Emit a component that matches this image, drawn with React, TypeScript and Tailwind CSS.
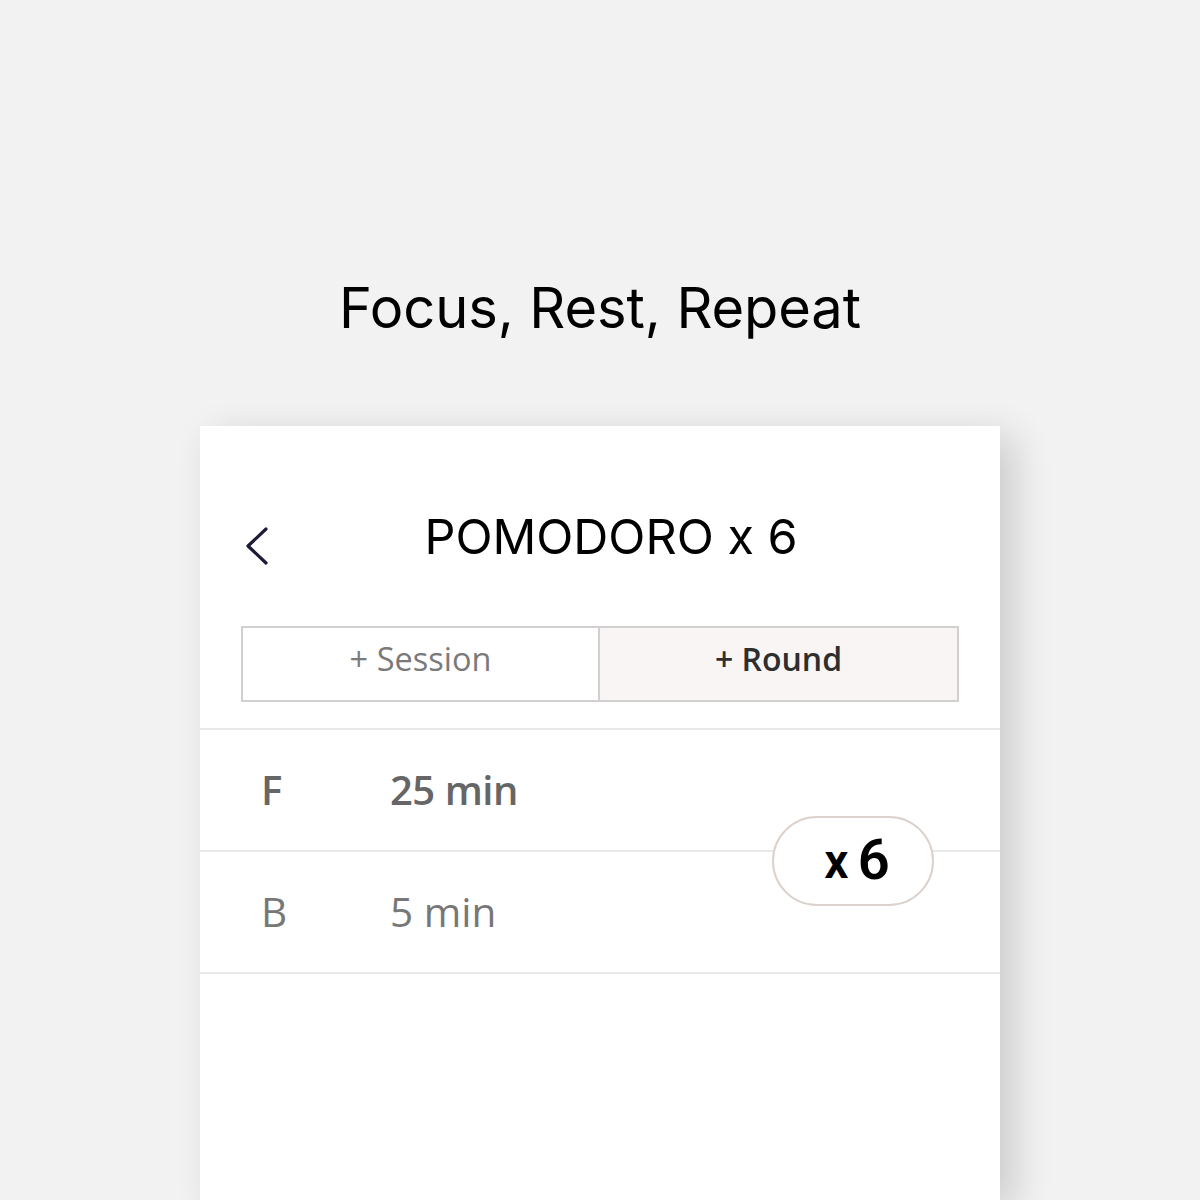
export default function App() {
  return (
    <div className="w-[1200px] h-[1200px] bg-[#f2f2f2] overflow-hidden flex flex-col items-center">
      <h1
        className="mt-[276px] h-[64px] text-[56px] leading-[64px] text-black tracking-[-0.1px]"
        style={{ fontFamily: 'Inter, "Liberation Sans", sans-serif' }}
      >
        Focus, Rest, Repeat
      </h1>
      <div className="mt-[86px] w-[800px] flex-1 bg-white shadow-[14px_10px_36px_rgba(0,0,0,0.16)] flex flex-col">
        <div className="relative h-[200px] flex items-start">
          <svg
            className="absolute left-[43px] top-[100px]"
            width="30"
            height="40"
            viewBox="0 0 30 40"
            fill="none"
          >
            <path d="M23 3 L5 20 L23 37" stroke="#1c1b38" strokeWidth="3.2" strokeLinecap="round" strokeLinejoin="round" />
          </svg>
          <div
            className="w-full pl-[22px] mt-[83px] text-center text-[48.5px] leading-[56px] text-black"
            style={{ fontFamily: 'Inter, "Liberation Sans", sans-serif' }}
          >
            POMODORO x 6
          </div>
        </div>
        <div
          className="mx-[41px] h-[76px] border-2 border-[#d0d0d0] grid grid-cols-[355px_1fr]"
          style={{ fontFamily: '"Open Sans", "Liberation Sans", sans-serif' }}
        >
          <div className="flex items-center justify-center text-[32.5px] text-[#7a7a7a] bg-white pb-[10px]">
            + Session
          </div>
          <div className="flex items-center justify-center text-[32px] font-semibold text-[#2e2e2e] bg-[#f8f5f4] border-l-2 border-[#d0d0d0] pb-[10px]">
            + Round
          </div>
        </div>
        <div
          className="relative mt-[26px] border-t-2 border-[#e8e8e8]"
          style={{ fontFamily: '"Open Sans", "Liberation Sans", sans-serif' }}
        >
          <div className="h-[122px] border-b-2 border-[#e8e8e8] flex items-center text-[40px] font-semibold text-[#666] tracking-[-0.5px]">
            <span className="w-[190px] pl-[61px]">F</span>
            <span>25 min</span>
          </div>
          <div className="h-[122px] border-b-2 border-[#e8e8e8] flex items-center text-[40.5px] text-[#777]">
            <span className="w-[190px] pl-[61px]">B</span>
            <span>5 min</span>
          </div>
          <div
            className="absolute left-[572px] top-[86px] w-[162px] h-[90px] rounded-full border-2 border-[#dcd2cd] bg-white flex items-center justify-center pl-[8px] pb-[2px] font-semibold text-black"
            style={{ fontFamily: 'Roboto, "Liberation Sans", sans-serif' }}
          >
            <span className="text-[48px] leading-none mt-[4px]">x</span>
            <span className="ml-[9px] text-[56px] leading-none">6</span>
          </div>
        </div>
      </div>
    </div>
  );
}
